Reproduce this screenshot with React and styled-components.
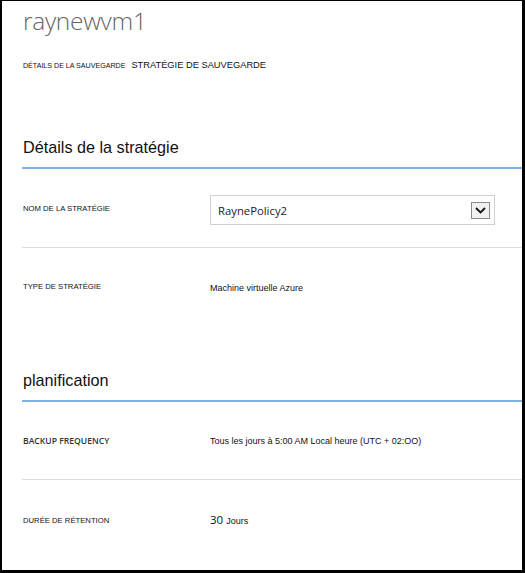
import React from 'react';
import styled, { createGlobalStyle } from 'styled-components';

const Global = createGlobalStyle`
  html, body { margin: 0; padding: 0; background: #000; }
  body { font-family: "Liberation Sans", Arial, sans-serif; }
`;

const Frame = styled.div`
  box-sizing: border-box;
  width: 525px;
  height: 573px;
  background: #fff;
  border-style: solid;
  border-color: #000;
  border-width: 1px 3px 3px 2px;
  padding-left: 20px;
  overflow: hidden;
`;

const Title = styled.h1`
  margin: 0;
  padding: 3px 0 0 1px;
  font-family: "Open Sans", sans-serif;
  font-weight: 300;
  font-size: 24.5px;
  line-height: 34px;
  letter-spacing: -0.3px;
  color: #666;
`;

const Breadcrumb = styled.nav`
  display: flex;
  align-items: baseline;
  gap: 6px;
  margin: 21px 0 0 1px;
  color: #111;
`;

const Crumb = styled.span`
  font-size: ${p => (p.$current ? '9.3px' : '7.1px')};
  line-height: 12px;
`;

const SectionHeader = styled.h2`
  margin: ${p => p.$top}px 0 0;
  padding: 0 0 10px 1px;
  border-bottom: 2px solid #7fb2e5;
  font-weight: 400;
  font-size: 16.2px;
  line-height: 20px;
  color: #111;
`;

const Row = styled.div`
  display: grid;
  grid-template-columns: 188px 1fr;
  align-items: center;
  height: ${p => p.$h || 77}px;
  border-bottom: ${p => (p.$last ? 'none' : '1px solid #dcdcdc')};
`;

const Label = styled.div`
  padding-left: 1px;
  font-family: ${p => (p.$strong ? '"Open Sans", sans-serif' : '"Liberation Sans", Arial, sans-serif')};
  font-weight: ${p => (p.$strong ? 600 : 400)};
  font-size: ${p => (p.$strong ? '8.6px' : '7.7px')};
  color: ${p => (p.$strong ? '#333' : '#111')};
  margin-top: ${p => p.$shift || 0}px;
`;

const Value = styled.div`
  font-size: 9px;
  color: #111;
  margin-top: ${p => p.$shift || 0}px;
`;

const Select = styled.div`
  box-sizing: border-box;
  display: flex;
  align-items: center;
  justify-content: space-between;
  width: 285px;
  height: 30px;
  margin-top: 4px;
  padding: 0 4px 0 7px;
  border: 1px solid #cfcfcf;
  font-family: "Open Sans", sans-serif;
  font-size: 11.3px;
  color: #222;
`;

const ArrowButton = styled.span`
  box-sizing: border-box;
  display: flex;
  align-items: center;
  justify-content: center;
  width: 19px;
  height: 17px;
  border: 1px solid #8a8a8a;
  background: #f0f0f0;
`;

const Big = styled.span`
  font-family: "Open Sans", sans-serif;
  font-size: 11.5px;
  margin-right: 3px;
`;

export default function App() {
  return (
    <>
      <Global />
      <Frame>
        <Title>raynewvm1</Title>
        <Breadcrumb>
          <Crumb>DÉTAILS DE LA SAUVEGARDE</Crumb>
          <Crumb $current>STRATÉGIE DE SAUVEGARDE</Crumb>
        </Breadcrumb>

        <SectionHeader $top={65}>Détails de la stratégie</SectionHeader>
        <Row $h={78}>
          <Label>NOM DE LA STRATÉGIE</Label>
          <Select>
            RaynePolicy2
            <ArrowButton>
              <svg width="11" height="7" viewBox="0 0 11 7">
                <path d="M1 1 L5.5 5.5 L10 1" fill="none" stroke="#111" strokeWidth="1.8" />
              </svg>
            </ArrowButton>
          </Select>
        </Row>
        <Row $last>
          <Label>TYPE DE STRATÉGIE</Label>
          <Value $shift={2}>Machine virtuelle Azure</Value>
        </Row>

        <SectionHeader $top={45}>planification</SectionHeader>
        <Row>
          <Label $strong>BACKUP FREQUENCY</Label>
          <Value>Tous les jours à 5:00 AM Local heure (UTC + 02:OO)</Value>
        </Row>
        <Row $last $h={78}>
          <Label $shift={2}>DURÉE DE RÉTENTION</Label>
          <Value><Big>30</Big>Jours</Value>
        </Row>
      </Frame>
    </>
  );
}
